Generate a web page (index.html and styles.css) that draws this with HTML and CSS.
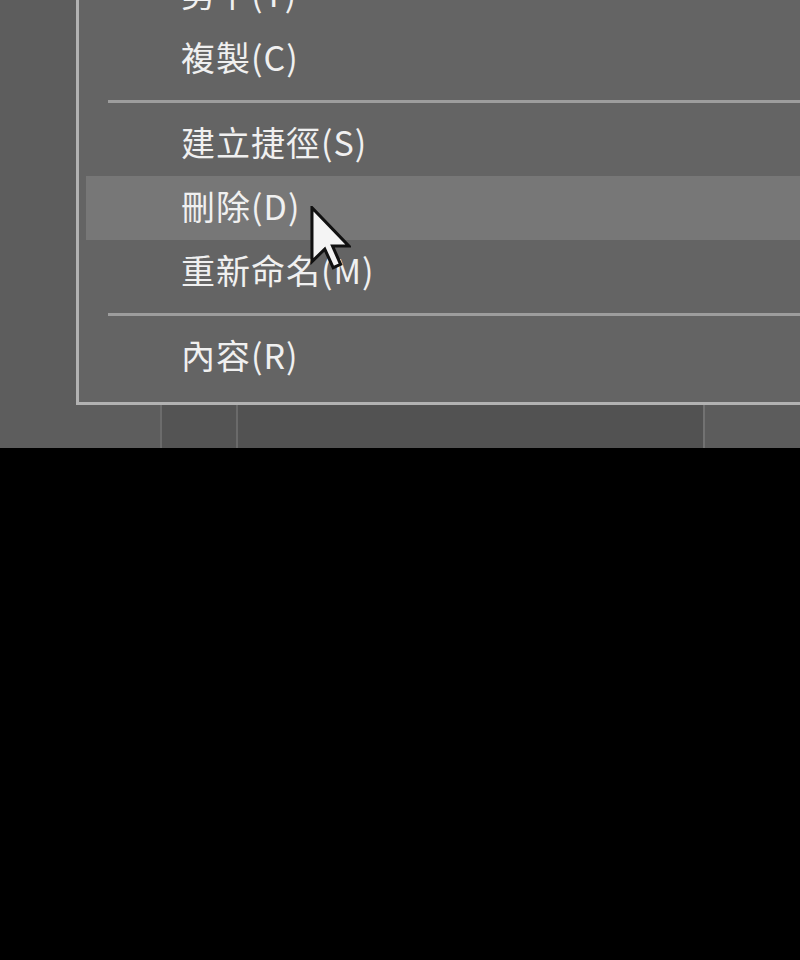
FILE: index.html
```html
<!DOCTYPE html>
<html lang="zh-Hant">
<head>
<meta charset="utf-8">
<link rel="stylesheet" href="styles.css">
</head>
<body>
<div class="screen">
  <div class="desk">
    <div class="menu">
      <div class="item">剪下(T)</div>
      <div class="item">複製(C)</div>
      <div class="sep"></div>
      <div class="item">建立捷徑(S)</div>
      <div class="item hover">刪除(D)</div>
      <div class="item">重新命名(M)</div>
      <div class="sep"></div>
      <div class="item">內容(R)</div>
    </div>
  </div>
  <div class="taskbar">
    <div class="seg seg-a"></div>
    <div class="seg seg-b"></div>
    <div class="seg seg-c"></div>
    <div class="seg seg-d"></div>
  </div>
  <svg class="cursor" width="41" height="64" viewBox="0 0 12 19">
    <polygon points="0.5,0.5 0.5,16.5 4.3,12.8 6.8,18.3 9,17.3 6.6,11.9 11.5,11.9" fill="#f4f4f4" stroke="#111" stroke-width="0.9" stroke-linejoin="miter"/>
  </svg>
</div>
</body>
</html>
```
FILE: styles.css
```css
html, body {
  margin: 0;
  padding: 0;
  background: #000;
}
.screen {
  position: relative;
  width: 800px;
  height: 448px;
  overflow: hidden;
  background: #5d5d5d;
  display: flex;
  flex-direction: column;
  font-family: "Noto Sans CJK TC", "Noto Sans", sans-serif;
}
.desk {
  height: 405px;
  display: flex;
  flex-direction: column;
  justify-content: flex-end;
  overflow: hidden;
  flex: none;
}
.menu {
  margin-left: 76px;
  background: #646464;
  border-left: 3px solid #b2b2b2;
  border-bottom: 3px solid #b2b2b2;
  padding-bottom: 13px;
  flex: none;
}
.item {
  box-sizing: border-box;
  height: 64px;
  line-height: 60px;
  padding-bottom: 4px;
  margin-left: 7px;
  padding-left: 95px;
  color: #f0f0f0;
  font-size: 34px;
  letter-spacing: 1px;
  white-space: nowrap;
}
.item.hover {
  background: #777777;
}
.sep {
  height: 21px;
  display: flex;
  align-items: center;
  padding-left: 29px;
}
.sep::before {
  content: "";
  flex: 1;
  height: 3px;
  background: #9d9d9d;
}
.taskbar {
  height: 43px;
  display: flex;
  flex: none;
}
.seg {
  height: 100%;
}
.seg-a {
  width: 160px;
  background: #5d5d5d;
}
.seg-b {
  width: 76px;
  background: #545454;
  border-left: 2px solid #6c6c6c;
  box-sizing: border-box;
}
.seg-c {
  width: 467px;
  background: #525252;
  border-left: 2px solid #6a6a6a;
  box-sizing: border-box;
}
.seg-d {
  flex: 1;
  background: #5c5c5c;
  border-left: 2px solid #727272;
}
.cursor {
  position: absolute;
  left: 310px;
  top: 206px;
}
```
